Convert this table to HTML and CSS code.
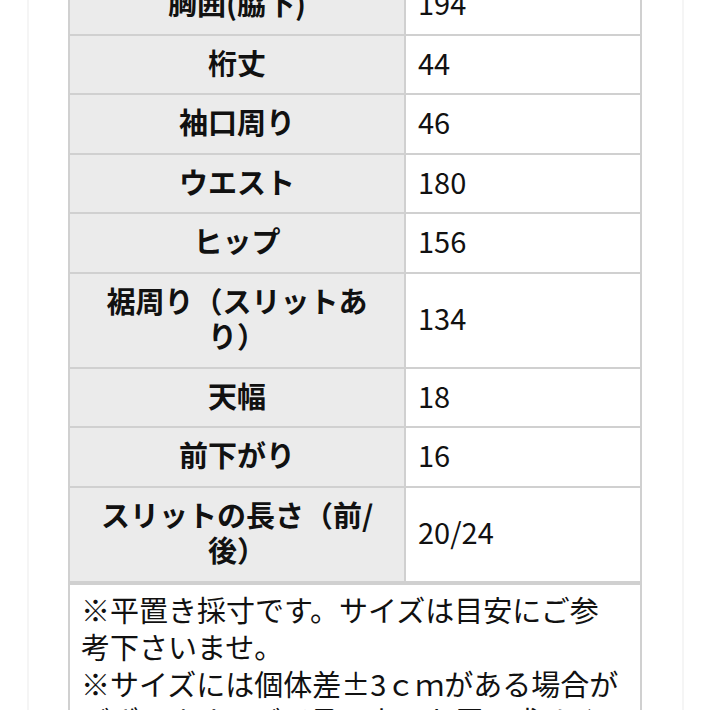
FILE: index.html
```html
<!DOCTYPE html>
<html lang="ja">
<head>
<meta charset="utf-8">
<link rel="stylesheet" href="styles.css">
</head>
<body>
<div class="page">
  <div class="card">
    <table class="size">
      <tbody>
        <tr><th>胸囲(脇下)</th><td>194</td></tr>
        <tr><th>桁丈</th><td>44</td></tr>
        <tr><th>袖口周り</th><td>46</td></tr>
        <tr><th>ウエスト</th><td>180</td></tr>
        <tr><th>ヒップ</th><td>156</td></tr>
        <tr><th>裾周り（スリットあり）</th><td>134</td></tr>
        <tr><th>天幅</th><td>18</td></tr>
        <tr><th>前下がり</th><td>16</td></tr>
        <tr><th>スリットの長さ（前/後）</th><td>20/24</td></tr>
        <tr class="note-row"><td colspan="2" class="note">※平置き採寸です。サイズは目安にご参考下さいませ。<br>※サイズには個体差±3ｃｍがある場合がございます。ご了承の上、お買い求めください。</td></tr>
      </tbody>
    </table>
  </div>
</div>
</body>
</html>
```
FILE: styles.css
```css
html, body {
  margin: 0;
  padding: 0;
  background: #ffffff;
}
body {
  font-family: "Noto Sans CJK JP", "Noto Sans", sans-serif;
  color: #111111;
  overflow: hidden;
}
.page {
  padding-left: 27px;
}
.card {
  width: 657px;
  box-sizing: border-box;
  border-left: 2px solid #f5f5f5;
  border-right: 2px solid #f5f5f5;
  padding: 0 0 0 39px;
  min-height: 760px;
}
.size {
  margin-top: -26px;
  width: 574px;
  border-collapse: collapse;
  table-layout: fixed;
  font-size: 29px;
  line-height: 35.5px;
}
.size th,
.size td {
  border: 2px solid #d0d0d0;
  padding: 9px 15px 13px;
}
.size th {
  width: 290px;
  padding-left: 22px;
  padding-right: 22px;
  background: #ebebeb;
  font-weight: 700;
  text-align: center;
}
.size td {
  background: #ffffff;
  font-weight: 400;
  text-align: left;
  padding-left: 12px;
}
.size .note-row td {
  border-top: 4px solid #d0d0d0;
}
.size td.note {
  padding: 6px 16px 10px 11px;
  line-height: 37px;
}
```
